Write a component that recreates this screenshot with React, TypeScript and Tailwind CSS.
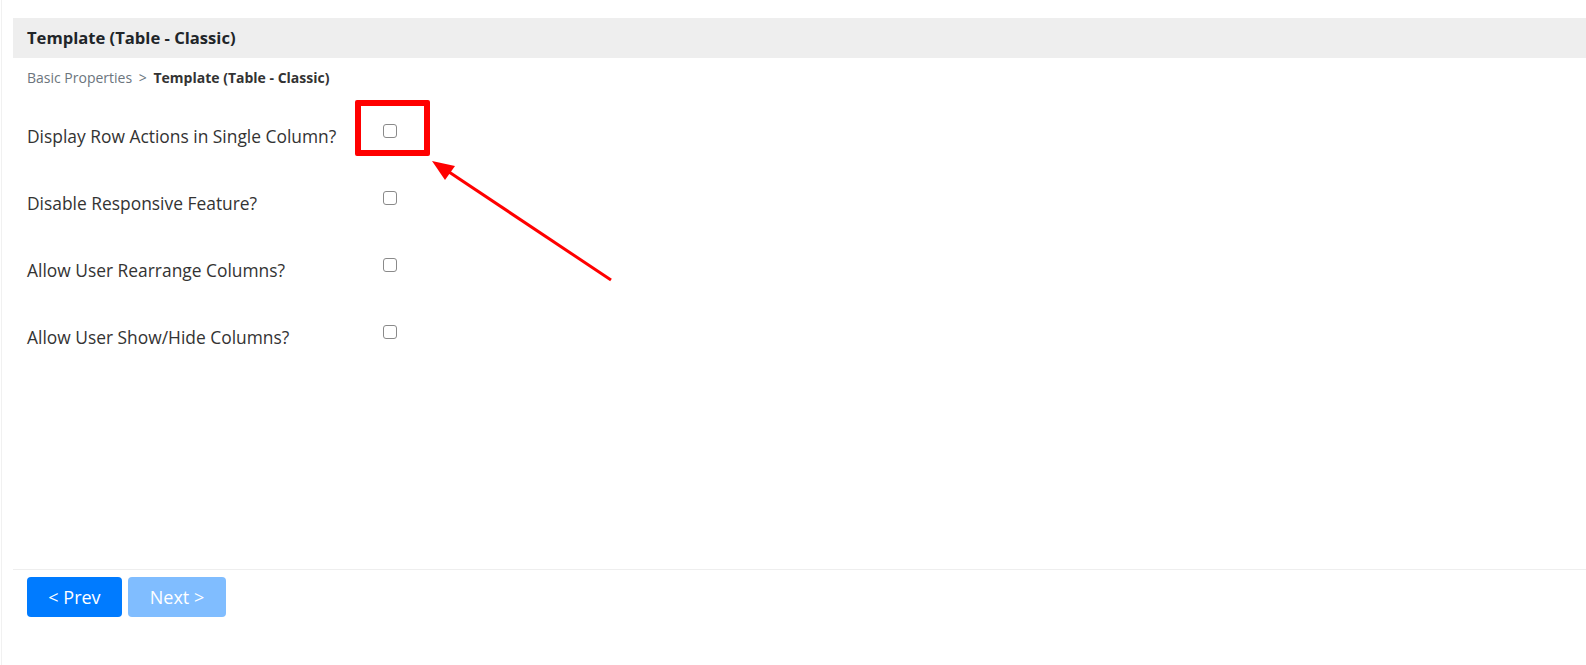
import React from "react";

const options = [
  "Display Row Actions in Single Column?",
  "Disable Responsive Feature?",
  "Allow User Rearrange Columns?",
  "Allow User Show/Hide Columns?",
];

function Checkbox() {
  return <div className="w-[14px] h-[14px] mb-[9px] rounded-[3px] border border-[#8a8a8a] bg-white" />;
}

export default function App() {
  return (
    <div className="relative flex h-[665px] bg-white" style={{ fontFamily: '"Open Sans", "Noto Sans", sans-serif' }}>
      <div className="ml-px flex flex-1 flex-col border-l border-[#f1f1f1] pl-[11px] pt-[18px]">
        {/* Cabecera */}
        <div className="flex h-10 items-center bg-[#eeeeee] pl-[14px] text-[16.6px] font-bold text-[#212529]">
          Template (Table - Classic)
        </div>

        <div className="mt-[10px] pl-[14px] text-[14px] leading-5 text-[#6c757d]">
          Basic Properties <span className="mx-[3px]">&gt;</span>{" "}
          <span className="font-bold text-[#333]">Template (Table - Classic)</span>
        </div>

        <div className="mt-[14px] pl-[14px]">
          {options.map((label) => (
            <div key={label} className="flex h-[67px] items-center">
              <div className="w-[356px] text-[17.4px] leading-6 text-[#333]">{label}</div>
              <Checkbox />
            </div>
          ))}
        </div>

        <div className="flex-1" />

        {/* Footer */}
        <div className="border-t border-[#eeeeee] pb-12 pl-[14px] pt-[7px]">
          <div className="flex gap-[6px]">
            <button className="h-10 w-[95px] rounded-[4px] bg-[#007bff] text-[18px] text-white">&lt; Prev</button>
            <button className="h-10 w-[98px] rounded-[4px] bg-[#80bdff] text-[18px] text-white">Next &gt;</button>
          </div>
        </div>
      </div>

      {/* Anotación */}
      <div className="absolute left-[355px] top-[100px] h-[56px] w-[75px] rounded-[2px] border-[6px] border-[#ff0000]" />
      <svg className="absolute left-0 top-0" width="1586" height="665" style={{ pointerEvents: "none" }}>
        <line x1="611" y1="280" x2="446" y2="170" stroke="#ff0000" strokeWidth="3" />
        <polygon points="432,161 455,166 445,180" fill="#ff0000" />
      </svg>
    </div>
  );
}
